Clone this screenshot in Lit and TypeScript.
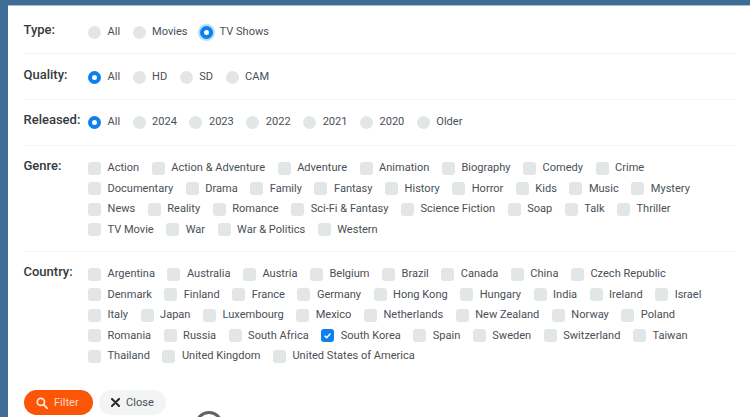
import { LitElement, html, css, nothing } from "lit";
import { customElement } from "lit/decorators.js";

type Kind = "radio" | "check";
interface Group { label: string; kind: Kind; rows: string[][]; on: string; cls: string; }

const groups: Group[] = [
  { label: "Type:", kind: "radio", on: "TV Shows", cls: "g-type", rows: [["All", "Movies", "TV Shows"]] },
  { label: "Quality:", kind: "radio", on: "All", cls: "g-quality", rows: [["All", "HD", "SD", "CAM"]] },
  { label: "Released:", kind: "radio", on: "All", cls: "g-released", rows: [["All", "2024", "2023", "2022", "2021", "2020", "Older"]] },
  { label: "Genre:", kind: "check", on: "", cls: "g-genre", rows: [
    ["Action", "Action & Adventure", "Adventure", "Animation", "Biography", "Comedy", "Crime"],
    ["Documentary", "Drama", "Family", "Fantasy", "History", "Horror", "Kids", "Music", "Mystery"],
    ["News", "Reality", "Romance", "Sci-Fi & Fantasy", "Science Fiction", "Soap", "Talk", "Thriller"],
    ["TV Movie", "War", "War & Politics", "Western"],
  ] },
  { label: "Country:", kind: "check", on: "South Korea", cls: "g-country", rows: [
    ["Argentina", "Australia", "Austria", "Belgium", "Brazil", "Canada", "China", "Czech Republic"],
    ["Denmark", "Finland", "France", "Germany", "Hong Kong", "Hungary", "India", "Ireland", "Israel"],
    ["Italy", "Japan", "Luxembourg", "Mexico", "Netherlands", "New Zealand", "Norway", "Poland"],
    ["Romania", "Russia", "South Africa", "South Korea", "Spain", "Sweden", "Switzerland", "Taiwan"],
    ["Thailand", "United Kingdom", "United States of America"],
  ] },
];

@customElement("app-root")
export class AppRoot extends LitElement {
  static styles = css`
    :host { display: block; width: 750px; height: 417px; overflow: hidden; background: #3f6d96; font-family: Roboto, "Liberation Sans", sans-serif; }
    .panel { margin: 5px 0 0 7.5px; height: 412px; background: #fff; border-top: 1px solid #a9c0d6; box-sizing: border-box; padding: 0 0 0 16px; overflow: hidden; }
    .group { display: flex; align-items: flex-start; border-bottom: 1px solid #f3f4f5; margin-right: 14px; box-sizing: border-box; }
    .g-type { height: 48px; padding-top: 17px; }
    .g-quality { height: 46px; padding-top: 14px; }
    .g-released { height: 46px; padding-top: 13px; }
    .g-genre { height: 106px; padding-top: 13px; }
    .g-country { height: 121px; padding-top: 13px; border-bottom: 0; }
    .label { width: 64.5px; flex: none; font-size: 13px; font-weight: 500; color: #343a40; line-height: 18px; margin-top: -2px; }
    .rows { display: flex; flex-direction: column; gap: 2.5px; }
    .row { display: flex; gap: 12.5px; height: 18px; align-items: center; }
    .item { display: flex; align-items: center; gap: 6.5px; font-size: 11.05px; color: #4a5056; line-height: 18px; white-space: nowrap; }
    .box { width: 13px; height: 13px; background: #e2e6e7; flex: none; box-sizing: border-box; display: flex; align-items: center; justify-content: center; }
    .radio { border-radius: 50%; }
    .check { border-radius: 3px; }
    .radio.on { background: #fff; border: 4px solid #0d7fee; }
    .radio.glow { box-shadow: 0 0 0 2px #b6dcfb; }
    .check.on { background: #0d7fee; }
    .check svg { width: 9px; height: 9px; }
    .actions { display: flex; gap: 6.5px; margin-top: 17px; position: relative; }
    .btn { height: 25px; border-radius: 13px; display: flex; align-items: center; font-size: 11.05px; box-sizing: border-box; }
    .filter { width: 69px; background: #fb5607; color: #ffd9c6; padding-left: 12.5px; gap: 6px; }
    .close { width: 67px; background: #f3f4f4; color: #4a5056; padding-left: 12px; gap: 6px; }
    .btn svg { flex: none; }
    .spinner { position: absolute; left: 171px; top: 21px; width: 28px; height: 28px; border-radius: 50%; border: 3px solid #5f6365; box-sizing: border-box; background: #fff; }
  `;

  private item(g: Group, t: string) {
    const on = t === g.on;
    const glow = on && g.label === "Type:";
    return html`<div class="item">
      <span class="box ${g.kind} ${on ? "on" : ""} ${glow ? "glow" : ""}">
        ${on && g.kind === "check"
          ? html`<svg viewBox="0 0 10 10"><path d="M1.8 5.2 4.1 7.4 8.3 2.8" fill="none" stroke="#fff" stroke-width="1.7"/></svg>`
          : nothing}
      </span>
      <span>${t}</span>
    </div>`;
  }

  render() {
    return html`<div class="panel">
      ${groups.map(g => html`<div class="group ${g.cls}">
        <div class="label">${g.label}</div>
        <div class="rows">
          ${g.rows.map(r => html`<div class="row">${r.map(t => this.item(g, t))}</div>`)}
        </div>
      </div>`)}
      <div class="actions">
        <div class="btn filter">
          <svg width="12" height="12" viewBox="0 0 13 13"><circle cx="5.3" cy="5.3" r="3.9" fill="none" stroke="#ffe6da" stroke-width="1.9"/><path d="M8.2 8.2 12 12" stroke="#ffe6da" stroke-width="2.1" stroke-linecap="round"/></svg>
          <span>Filter</span>
        </div>
        <div class="btn close">
          <svg width="9" height="9" viewBox="0 0 9 9"><path d="M1 1 8 8M8 1 1 8" stroke="#2b2b2b" stroke-width="2.1" stroke-linecap="round"/></svg>
          <span>Close</span>
        </div>
        <div class="spinner"></div>
      </div>
    </div>`;
  }
}
